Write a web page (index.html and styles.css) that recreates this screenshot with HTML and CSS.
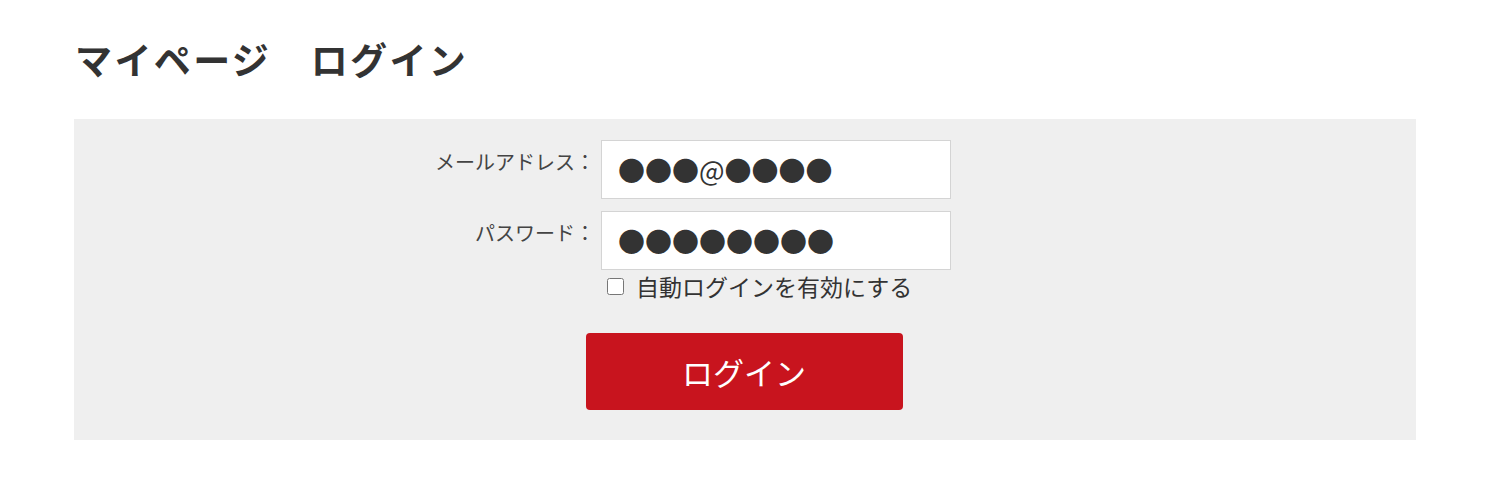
FILE: index.html
```html
<html>
  <head>
    <meta charset="utf-8" />
    <title>マイページ ログイン</title>
    <link rel="stylesheet" href="styles.css">
  </head>
  <body>
    <main class="page">
      <h1 class="page-title">マイページ　ログイン</h1>
      <form class="login-box" id="login-form">
        <div class="fields">
          <label class="field-label" for="email">メールアドレス：</label>
          <input class="field-input" type="text" id="email" name="email" value="●●●@●●●●" />
          <label class="field-label" for="password">パスワード：</label>
          <input class="field-input" type="text" id="password" name="password" value="●●●●●●●●" />
          <label class="remember">
            <input type="checkbox" name="remember" />
            <span>自動ログインを有効にする</span>
          </label>
        </div>
        <div class="actions">
          <button class="login-button" type="submit">ログイン</button>
        </div>
      </form>
    </main>
  </body>
</html>
```

FILE: styles.css
```css
html,
body,
input,
button {
  font-family: "Noto Sans CJK JP", "Noto Sans", sans-serif;
  color: #333;
}

body {
  margin: 0;
  background: #fff;
}

.page {
  padding: 0 74px;
}

.page-title {
  margin: 0;
  padding: 32px 0 0 1px;
  height: 119px;
  box-sizing: border-box;
  font-size: 37px;
  font-weight: bold;
  letter-spacing: 2.4px;
  line-height: 54px;
}

.login-box {
  margin: 0;
  background: #efefef;
  padding: 21px 0 30px 62px;
}

.fields {
  display: grid;
  grid-template-columns: 1fr 350px 1fr;
  column-gap: 6px;
  row-gap: 12px;
}

.field-label {
  grid-column-start: 1;
  text-align: right;
  font-size: 20px;
  line-height: 28px;
  padding-top: 8px;
  color: #444;
}

.field-input {
  grid-column-start: 2;
  height: 59px;
  box-sizing: border-box;
  border: 1px solid #d4d4d4;
  background: #fff;
  padding: 0 16px;
  font-size: 27px;
  color: #333;
}

.remember {
  grid-column: 2 / 4;
  margin-top: -11px;
  display: flex;
  align-items: center;
  gap: 12px;
  font-size: 23px;
  line-height: 30px;
  padding-left: 6px;
}

.remember input {
  margin: 0;
  width: 17px;
  height: 17px;
}

.actions {
  display: flex;
  justify-content: center;
  padding: 32px 64px 0 0;
}

.login-button {
  width: 317px;
  height: 77px;
  border: none;
  border-radius: 4px;
  background: #c8141e;
  color: #fff;
  font-size: 31px;
}
```
